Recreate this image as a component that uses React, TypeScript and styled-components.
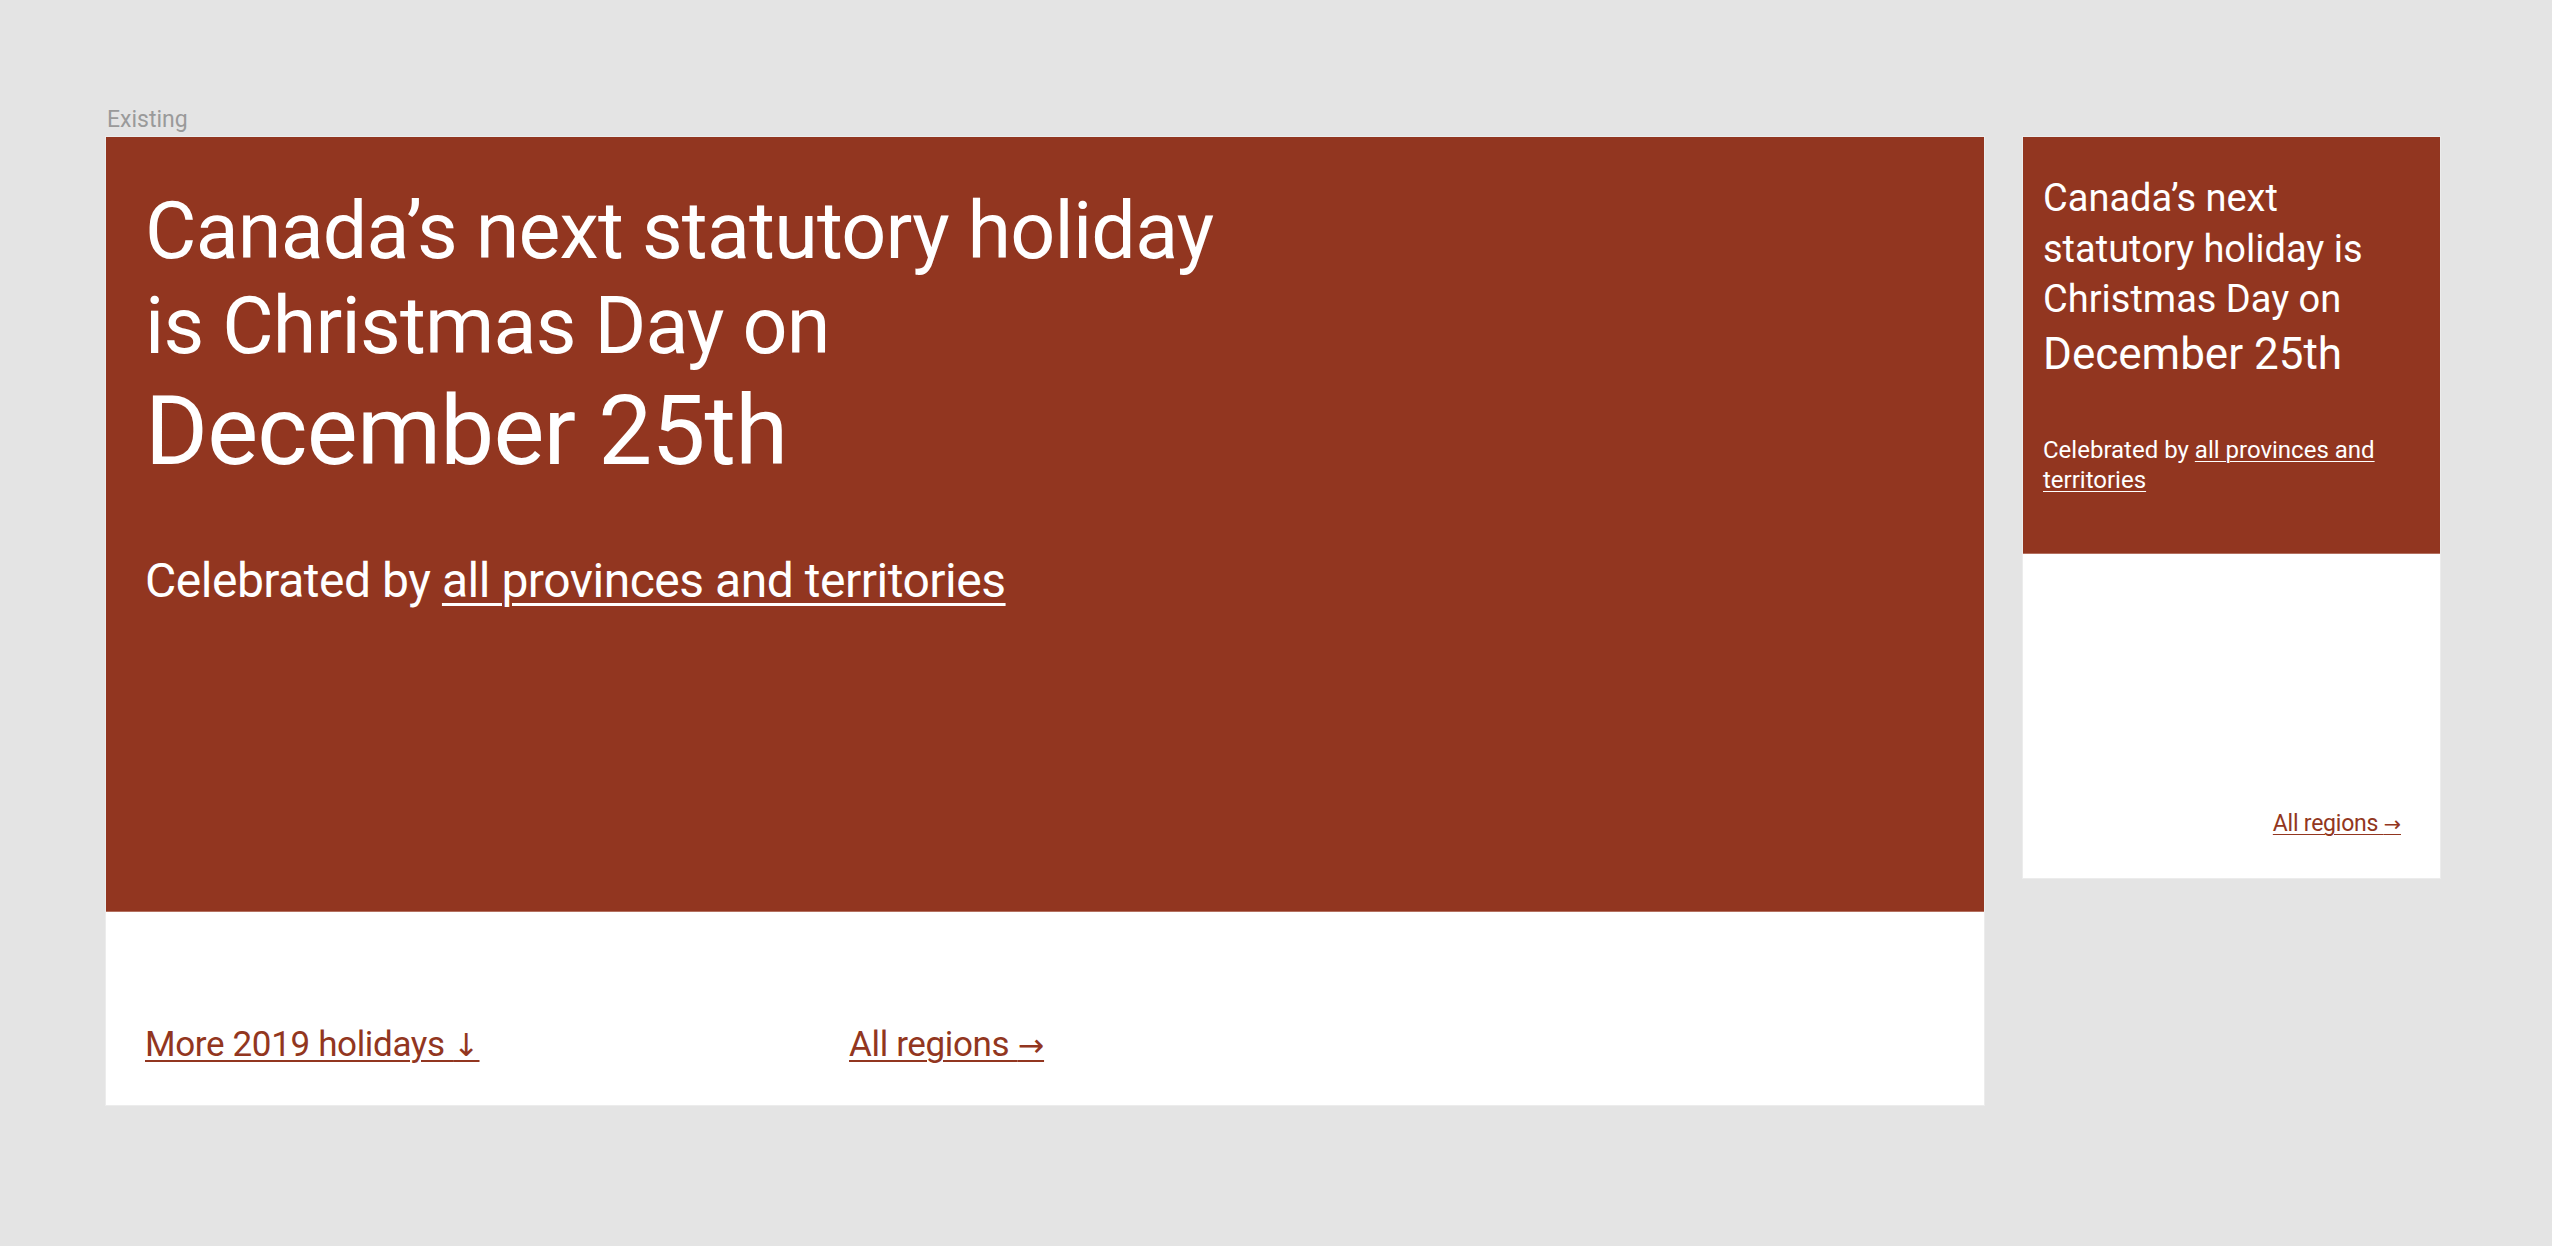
import React from "react";
import styled, { createGlobalStyle } from "styled-components";

const RED = "#923620";

const Global = createGlobalStyle`
  html, body {
    margin: 0;
    padding: 0;
    background: #e4e4e4;
    font-family: Roboto, "Noto Sans", Arial, sans-serif;
  }
`;

const Page = styled.div`
  min-height: 1246px;
  box-sizing: border-box;
  padding: 105px 0 0 106px;
  background: #e4e4e4;
`;

const Label = styled.div`
  font-size: 23px;
  line-height: 29px;
  color: #9a9a9a;
  margin: 0 0 3px 1px;
`;

const Row = styled.div`
  display: flex;
  align-items: flex-start;
  gap: 39px;
`;

const Card = styled.section<{ $w: number; $h: number }>`
  width: ${(p) => p.$w}px;
  height: ${(p) => p.$h}px;
  display: flex;
  flex-direction: column;
  background: #ffffff;
  box-shadow: 0 0 0 1px #ececec;
`;

const Banner = styled.div<{ $h: number; $pt: number; $px: number }>`
  box-sizing: border-box;
  height: ${(p) => p.$h}px;
  padding: ${(p) => p.$pt}px ${(p) => p.$px}px 0;
  background: ${RED};
  color: #ffffff;
  border-bottom: 1px solid #b4705f;
`;

const Heading = styled.h1<{ $size: number; $lh: number; $ls: number; $max?: number }>`
  margin: 0;
  font-weight: 400;
  font-size: ${(p) => p.$size}px;
  line-height: ${(p) => p.$lh};
  letter-spacing: ${(p) => p.$ls}em;
  max-width: ${(p) => (p.$max ? `${p.$max}px` : "none")};
`;

const DateLine = styled.span<{ $size: number; $lh: number }>`
  display: block;
  font-size: ${(p) => p.$size}px;
  line-height: ${(p) => p.$lh};
`;

const Sub = styled.p<{ $size: number; $lh: number; $mt: number; $ls: number }>`
  margin: ${(p) => p.$mt}px 0 0;
  font-size: ${(p) => p.$size}px;
  line-height: ${(p) => p.$lh};
  letter-spacing: ${(p) => p.$ls}em;
`;

const WhiteLink = styled.a`
  color: #ffffff;
  text-decoration: underline;
  text-underline-offset: 0.12em;
  text-decoration-thickness: 0.06em;
`;

const Footer = styled.div<{ $justify: string; $px: number; $pb: number }>`
  flex: 1;
  display: flex;
  align-items: flex-end;
  justify-content: ${(p) => p.$justify};
  padding: 0 ${(p) => p.$px}px ${(p) => p.$pb}px;
`;

const LinkGrid = styled.div`
  display: grid;
  grid-template-columns: 704px auto;
  align-items: baseline;
`;

const RedLink = styled.a<{ $size: number }>`
  color: ${RED};
  font-size: ${(p) => p.$size}px;
  line-height: 1.25;
  letter-spacing: -0.01em;
  text-decoration: underline;
  text-underline-offset: 0.12em;
  text-decoration-thickness: 0.065em;
  white-space: nowrap;
`;

const Arrow = styled.span`
  font-family: "DejaVu Sans", Roboto, sans-serif;
  font-size: 0.9em;
  letter-spacing: 0;
`;

export default function App() {
  return (
    <>
      <Global />
      <Page>
        <Label>Existing</Label>
        <Row>
          <Card $w={1878} $h={968}>
            <Banner $h={775} $pt={47} $px={39}>
              <Heading $size={79} $lh={1.2} $ls={-0.01}>
                Canada’s next statutory holiday
                <br />
                is Christmas Day on
                <DateLine $size={96} $lh={1.2}>December 25th</DateLine>
              </Heading>
              <Sub $size={48} $lh={1.4} $mt={58} $ls={-0.01}>
                Celebrated by <WhiteLink href="#">all provinces and territories</WhiteLink>
              </Sub>
            </Banner>
            <Footer $justify="flex-start" $px={39} $pb={38}>
              <LinkGrid>
                <RedLink $size={35} href="#">More 2019 holidays <Arrow>↓</Arrow></RedLink>
                <RedLink $size={35} href="#">All regions <Arrow>→</Arrow></RedLink>
              </LinkGrid>
            </Footer>
          </Card>
          <Card $w={417} $h={741}>
            <Banner $h={417} $pt={36} $px={20}>
              <Heading $size={38} $lh={1.33} $ls={0} $max={360}>
                Canada’s next statutory holiday is Christmas Day on
                <DateLine $size={44} $lh={1.33}>December 25th</DateLine>
              </Heading>
              <Sub $size={24} $lh={1.25} $mt={52} $ls={0}>
                Celebrated by <WhiteLink href="#">all provinces and territories</WhiteLink>
              </Sub>
            </Banner>
            <Footer $justify="flex-end" $px={39} $pb={39}>
              <RedLink $size={23} href="#">All regions <Arrow>→</Arrow></RedLink>
            </Footer>
          </Card>
        </Row>
      </Page>
    </>
  );
}
